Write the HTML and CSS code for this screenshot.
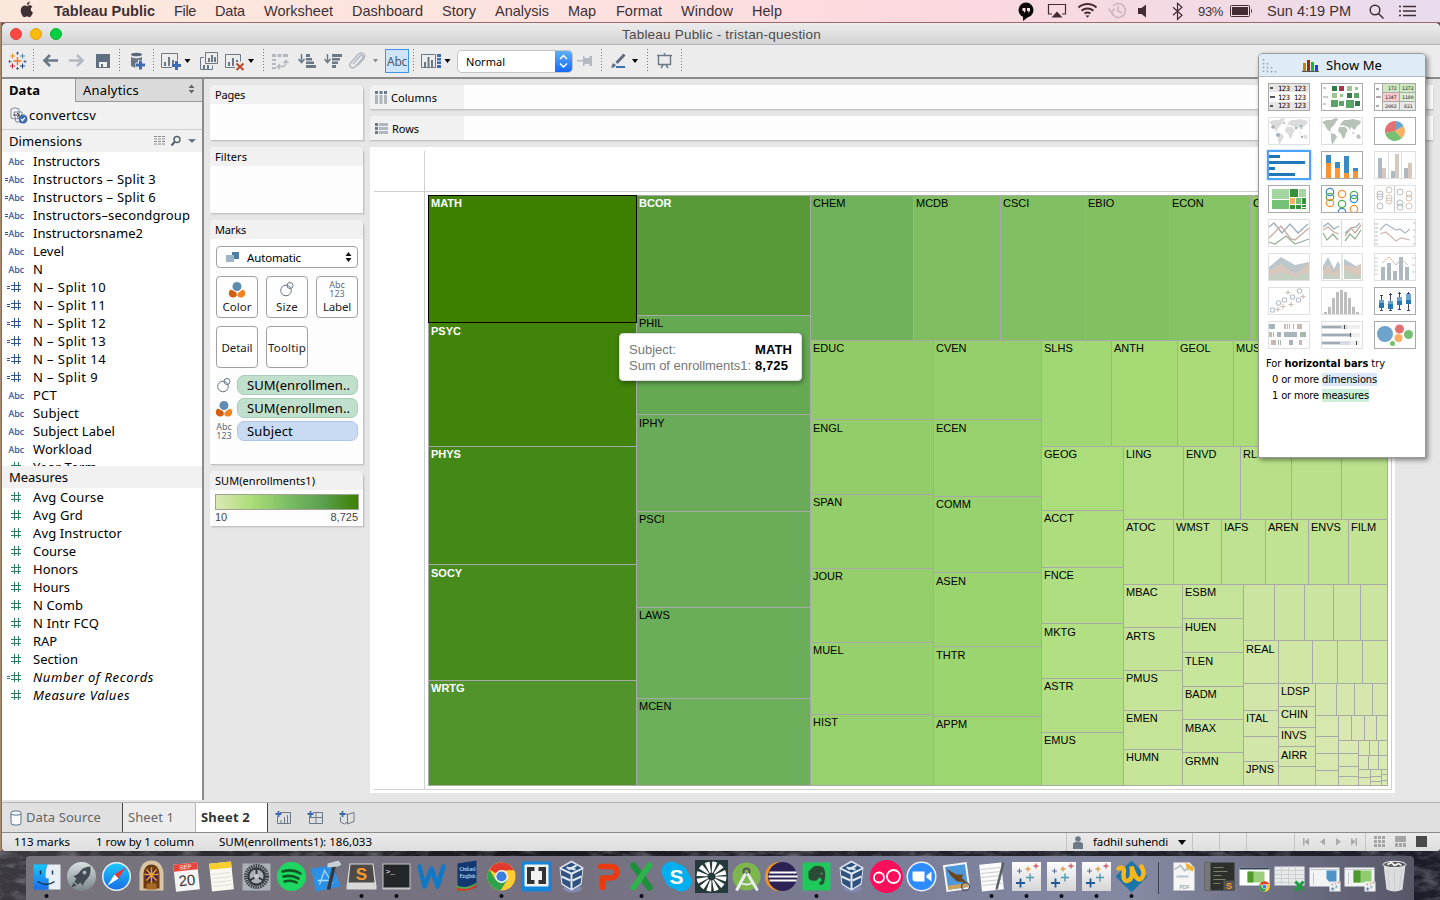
FILE: index.html
```html
<!DOCTYPE html>
<html lang="en">
<head>
<meta charset="utf-8">
<title>Tableau Public - tristan-question</title>
<link rel="stylesheet" href="styles.css">
</head>
<body>
<svg class="defs" width="0" height="0">
  <defs>
    <g id="world"><path d="M1 5l5-2 6 0 3 2-2 3-3 3-1 3 2 2-2-1-3-3-3-5zM11 2l5-1 1 2-3 2zM10 16l4 1 2 3-2 3-2 4-1 0-1-5zM20 6l3-3 4 0 5-1 8 2-1 3-3 2-2 4-2-1-2-2-1 3-2-3-3-1-3-1-2 1zM18 10l6 0 3 3-2 3-1 4-2 2-2-5-3-3zM35 19l3-2 2 4-3 1zM31 14l3 3-2 0z"/></g>
    <g id="hash"><path d="M3.500-5V5M7.500-5V5M0-1.500H10M0 2.500H10" fill="none" stroke-width="1"/></g>
    <g id="plus4" fill="none"><path d="M-6 2v9M-10.500 6.500h9" stroke="#1d5a96" stroke-width="1.800"/><path d="M3.500-3v8M-.5 1h8" stroke="#4a9bb0" stroke-width="1.400"/><path d="M1.500-10v5M-1-7.500h5" stroke="#e39a4a" stroke-width="1.300"/><path d="M-7-8v5M-9.500-5.500h5" stroke="#5a6b9a" stroke-width="1"/><path d="M9.500-13v5M7-10.500h5" stroke="#cf5a63" stroke-width="1.300"/></g>
    <linearGradient id="gp" x2="0" y2="1"><stop stop-color="#fdfdfd"/><stop offset="1" stop-color="#d5d5d9"/></linearGradient>
    <linearGradient id="gb" x2="0" y2="1"><stop stop-color="#1ac8fb"/><stop offset="1" stop-color="#1a6fe8"/></linearGradient>
    <linearGradient id="gs" x2="0" y2="1"><stop stop-color="#d9e0e0"/><stop offset="1" stop-color="#79848a"/></linearGradient>
    <g id="colorico"><path d="M-6 .5a4.300 4.300 0 1 0 6 5.500l-1-3z" fill="#d4600f"/><path d="M6 .5a4.300 4.300 0 1 1-6 5.500l2-3z" fill="#f58220"/><circle cy="-2.500" r="5.200" fill="#fff"/><circle cy="-2.500" r="4.500" fill="#5d8cb0"/></g>
    <g id="sizeico" fill="none" stroke="#6a7685"><circle cx="-1" cy="1.500" r="5.300"/><circle cx="3" cy="-3.500" r="3"/></g>
    <g id="vbox"><ellipse cx="1" cy="12" rx="9" ry="4" fill="#8389b0"/><path d="M0-16L12-9 10 8 0 14-10 8-12-9z" fill="#dfe7f0"/><path d="M0-14L10-8.500 0-4-10-8.500z" fill="#2c4f80"/><path d="M-11-7L-1-2V12L-9 7zM11-7L1-2V12L9 7z" fill="#31517f"/><path d="M-10 0L-1 4M10 0L1 4M-5-9L4-7M5-11L-3-7" stroke="#dfe7f0" stroke-width="2"/></g>
    <g id="chrome"><circle r="14" fill="#fc3"/><path d="M0 0L-12-7A14 14 0 0 1 12.500-6.500L0-6z" fill="#e23a2e"/><path d="M-12.200-7A14 14 0 0 0-1 14L6 3-6 3z" fill="#2fa34b"/><circle r="6.400" fill="#fff"/><circle r="5.100" fill="#3b7de0"/></g>
    <filter id="rough"><feTurbulence type="fractalNoise" baseFrequency=".05 .12" numOctaves="4" seed="4"/><feColorMatrix values="0 0 0 0 .55 0 0 0 0 .56 0 0 0 0 .62 1.800 0 0 0 -.75"/></filter>
  </defs>
</svg>
<div class="desktop">
<header class="menubar">
  <svg width="34" height="22" viewBox="20 0 34 22"><path d="M28 5.800c1.200-.8 3.200-.6 4.300.9-2.200 1.500-1.900 4.500.6 5.600-.7 2.400-2 4.900-3.300 4.900-1.100 0-1.400-.6-2.600-.6s-1.600.6-2.600.6c-1.800 0-4.200-4.600-3.600-7.700.6-3.600 3.800-4.700 5.700-3.600.6.300.9.200 1.500-.1zM26.800 5c-.1-1.700 1.300-3.300 3-3.500.2 1.800-1.300 3.500-3 3.500z" fill="#3f3034"/></svg>
  <b data-w="101">Tableau Public</b><span data-w="22">File</span><span data-w="30">Data</span><span data-w="69">Worksheet</span><span data-w="71">Dashboard</span><span data-w="34">Story</span><span data-w="54">Analysis</span><span data-w="28">Map</span><span data-w="46">Format</span><span data-w="52">Window</span><span data-w="30">Help</span>
  <svg width="180" height="22" viewBox="1017 0 180 22"><circle cx="1026" cy="10" r="7.500" fill="#0c0808"/><path d="M1023 15v6l5-4z" fill="#0c0808"/><path d="M1022.500 8h3v3l-1.500 2v-2h-1.500zM1027 8h3v3l-1.500 2v-2h-1.500z" fill="#fbdce0"/><g fill="none" stroke="#432c34" stroke-width="1.200"><path d="M1052 14h-3.500V4.500h17V14h-3.500"/><path d="M1078.500 7.500a13.500 13.500 0 0 1 18 0M1081.500 10.700a9.500 9.500 0 0 1 12 0M1084.500 13.600a5 5 0 0 1 6 0" stroke-width="1.900"/><path d="M1173 6.500l9 8-4.500 4V2.500l4.500 4-9 8" transform="translate(0 .8)"/></g><path d="M1051.500 17.500l5.500-6 5.500 6zM1085.500 15.500h4l-2 2.200zM1138 8h3.500l4.500-3.500v13l-4.500-3.500h-3.500z" fill="#432c34"/><g fill="none" stroke="#cdb3bc" stroke-width="1.500"><path d="M1111.500 12a7 7 0 1 0 1.500-6M1118 6v5l4 2"/><path d="M1108.500 8.500l3 4 3-4"/></g></svg>
  <span class="pct" data-w="25">93%</span>
  <svg width="37" height="22" viewBox="1230 0 37 22"><rect x="1230.500" y="5.500" width="19" height="11" rx="1" fill="none" stroke="#432c34"/><rect x="1232" y="7" width="16" height="8" fill="#432c34"/><path d="M1251 8.500q2 2.500 0 5z" fill="#432c34"/></svg>
  <span data-w="84">Sun 4:19 PM</span>
  <svg width="60" height="22" viewBox="1365 0 60 22"><g fill="none" stroke="#432c34" stroke-width="1.500"><circle cx="1375" cy="10" r="4.800"/><path d="M1378.500 13.500l5 5"/><path d="M1399 6.500h2M1403 6.500h13M1399 11h2M1403 11h13M1399 15.500h2M1403 15.500h13" stroke-width="1.700"/></g></svg>
</header>

<main class="window">
  <div class="titlebar"><i class="dot red"></i><i class="dot yellow"></i><i class="dot green"></i><span class="title" data-w="199">Tableau Public - tristan-question</span></div>
  <div class="toolbar">
    <svg class="ic" width="24" viewBox="8 45 24 32"><g fill="none"><path d="M17.500 57v8M13.500 61h8" stroke="#e8762c" stroke-width="1.500"/><path d="M12.500 53.500v5M10 56h5" stroke="#eb912c"/><path d="M22.500 63.500v5M20 66h5" stroke="#1f457e"/><path d="M12.500 63.500v5M10 66h5" stroke="#c72035"/><path d="M22.500 53.500v5M20 56h5" stroke="#59879b"/><path d="M17.500 51.500v3.500M16 53h3M17.500 67v3M16 68.500h3M9.500 60v3M8.500 61.500h3M25 60v3M23.500 61.500h3" stroke="#5b6591"/></g></svg>
    <i class="sep"></i>
    <svg class="ic" width="26" viewBox="42 45 26 32"><path d="M58 60.500H45M50 55l-5.500 5.500L50 66" fill="none" stroke="#6b7886" stroke-width="2.600"/></svg>
    <svg class="ic" width="27" viewBox="68 45 27 32"><path d="M69 60.500h13M77 55l5.500 5.500L77 66" fill="none" stroke="#b2b9c2" stroke-width="2.600"/></svg>
    <svg class="ic" width="23" viewBox="95 45 23 32"><path d="M96 54h14v14H96z" fill="#5f6f80"/><path d="M99 62h8v5h-8z" fill="#eee"/><path d="M101 64h2v3h-2z" fill="#5f6f80"/></svg>
    <i class="sep"></i>
    <svg class="ic" width="22" viewBox="130 45 22 32"><ellipse cx="136.500" cy="54.500" rx="5.500" ry="1.800" fill="#566879"/><path d="M131 57q5.500 2.500 11 0v9q-5.500 3-11 0z" fill="#6b7886"/><path d="M131 61.500q5.500 2.500 11 0" stroke="#566879" fill="none"/><path d="M140.500 60v10M135.500 65h10" stroke="#eee" stroke-width="5"/><path d="M140.500 60.500v9M136 65h9" stroke="#3e6ab0" stroke-width="3"/></svg>
    <i class="sep"></i>
    <svg class="ic" width="24" viewBox="160 45 24 32"><path d="M172 67.500h-10.500v-14h16v7" fill="none" stroke="#6b7886"/><path d="M164 62h2v4h-2zM168 57h2v9h-2zM172 60h2v4h-2z" fill="#6b7886"/><path d="M176.500 61v9M172 65.500h9" stroke="#3e6ab0" stroke-width="3"/></svg>
    <svg class="ic caret" width="15" viewBox="184 45 15 32"><path d="M184.500 59h6l-3 4z"/></svg>
    <svg class="ic" width="25" viewBox="199 45 25 32"><g fill="none" stroke="#6b7886"><path d="M205.500 52.500h12v11h-12zM204 57.500h-3.500v12h12v-4"/></g><path d="M208 58h2v4h-2zM211 55h2v7h-2zM214 57h2v5h-2zM203 65h2v4h-2zM207 65h2v4h-2z" fill="#6b7886"/></svg>
    <svg class="ic" width="23" viewBox="224 45 23 32"><path d="M235 67.500h-9.500v-13h15v7" fill="none" stroke="#6b7886"/><path d="M228 62h2v4h-2zM232 58h2v8h-2zM236 60h2v2h-2z" fill="#6b7886"/><path d="M236.500 63.500l7 6.500M243.500 63.500l-7 6.500" stroke="#b8502f" stroke-width="2.200"/></svg>
    <svg class="ic caret" width="15" viewBox="247 45 15 32"><path d="M248 59h6l-3 4z"/></svg>
    <i class="sep"></i>
    <svg class="ic" width="26" viewBox="271 45 26 32"><path d="M272 54h4v3h-4zM277.500 54h4v3h-4zM283 54h5v3h-5zM272 59h4v2h-4zM272 63h4v2h-4zM272 67h4v2h-4z" fill="#b2b9c2"/><path d="M278 66.500h4q4 0 4-5M280 64l-2.500 2.500L280 69M283.500 63l2.500-2.500 2.500 2.500" fill="none" stroke="#b2b9c2" stroke-width="1.500"/></svg>
    <svg class="ic" width="27" viewBox="297 45 27 32"><path d="M301.500 54v8M298.500 59l3 3.500 3-3.500" fill="none" stroke="#6b7886" stroke-width="1.500"/><path d="M306 54h4v3h-4zM306 58h6v2.500h-6zM306 61.500h8v2.500h-8zM306 65h10v3h-10z" fill="#6b7886"/></svg>
    <svg class="ic" width="24" viewBox="324 45 24 32"><path d="M327.500 54v8M324.500 59l3 3.500 3-3.500" fill="none" stroke="#6b7886" stroke-width="1.500"/><path d="M332 54h10v3h-10zM332 58h8v2.500h-8zM332 61.500h6v2.500h-6zM332 65h4v3h-4z" fill="#6b7886"/></svg>
    <svg class="ic" width="24" viewBox="348 45 24 32"><path d="M353 64l7-8q2-1.500 3 .5v1.500l-8 9q-3 2-5-.5-.8-2 .5-3.500l8-9q3-2 5.500.5 1.500 2-.5 4.500l-6 6.500" fill="none" stroke="#b2b9c2" stroke-width="1.500"/></svg>
    <svg class="ic caret dim" width="13" viewBox="372 45 13 32"><path d="M373 59h5l-2.500 3.500z"/></svg>
    <span class="abcbtn"><span data-w="20">Abc</span></span>
    <i class="sep"></i>
    <svg class="ic" width="24" viewBox="420 45 24 32"><path d="M421.500 54.500h14v13h-14z" fill="none" stroke="#6b7886"/><path d="M424 62h2v5h-2zM427.500 57h2v10h-2zM431 60h2v7h-2z" fill="#6b7886"/><path d="M437 54h4v3h-4zM437 58h4v2.500h-4zM437 61.500h4v2.500h-4zM437 65h4v3h-4z" fill="#3e6ab0"/></svg>
    <svg class="ic caret" width="13" viewBox="444 45 13 32"><path d="M444.500 59h6l-3 4z"/></svg>
    <span class="select"><span data-w="39">Normal</span><svg width="17" height="21" viewBox="0 0 17 21"><path d="M5 8l3.500-3.500L12 8M5 12.500L8.500 16l3.500-3.500" fill="none" stroke="#fff" stroke-width="1.500"/></svg></span>
    <svg class="ic" width="24" viewBox="576 45 24 32"><path d="M577 60h6v1.600h-6zM583 56h1.500v2h5v-2h2.500v10h-2.500v-2h-5v2H583z" fill="#b2b9c2"/></svg>
    <i class="sep"></i>
    <svg class="ic" width="21" viewBox="610 45 21 32"><path d="M624.500 54.500l-8 8.500" stroke="#5f6f80" stroke-width="3"/><path d="M611 67.500l2-4.500 3 2-2 2.500z" fill="#5f6f80"/><path d="M616 67h9" stroke="#3e6ab0" stroke-width="2"/></svg>
    <svg class="ic caret" width="15" viewBox="631 45 15 32"><path d="M632 59h6l-3 4z"/></svg>
    <i class="sep"></i>
    <svg class="ic" width="24" viewBox="656 45 24 32"><path d="M657 55.500h15M658.500 56v8.500h12V56M661 68l2-3M668 68l-2-3M664.500 53v2" fill="none" stroke="#6b7886" stroke-width="1.400"/></svg>
    <i class="sep"></i>
  </div>

  <div class="work">
    <aside class="side">
      <div class="tabs"><b data-w="31">Data</b><span class="off"><span data-w="56">Analytics</span><svg width="7" height="10" viewBox="0 0 7 10"><path d="M.5 4L3.500.5 6.500 4zM.5 6l3 3.500 3-3.500z" fill="#666"/></svg></span></div>
      <div class="source"><svg width="18" height="18" viewBox="0 0 18 18"><path d="M1 2q4-2.500 8 0v9q-4 2-8 0zM4 5h8v10H6z" fill="#f5f5f5" stroke="#7a8794"/><path d="M3 8h6M7 6l2.500 2L7 10" fill="none" stroke="#444"/><circle cx="13" cy="12" r="4.500" fill="#3e6ab0"/><path d="M11 12l1.500 1.700L15 10.500" fill="none" stroke="#fff" stroke-width="1.200"/></svg><span data-w="67">convertcsv</span></div>
      <div class="head"><span data-w="73">Dimensions</span><svg width="44" height="12" viewBox="0 0 44 12"><path d="M0 1.500h12M0 4h12M0 6.500h12M0 9h12" stroke="#888" stroke-dasharray="3 1"/><circle cx="23" cy="4.500" r="3" fill="none" stroke="#555f6b" stroke-width="1.400"/><path d="M20.500 7l-3 3.500" stroke="#555f6b" stroke-width="2"/><path d="M34 4h8l-4 4z" fill="#6b7886"/></svg></div>
      <div class="list dims" id="dims"></div>
      <div class="head"><span data-w="59">Measures</span></div>
      <div class="list meas" id="meas"></div>
    </aside>

    <div class="content">
      <section class="cards">
        <div class="card pages"><h3 data-w="30">Pages</h3></div>
        <div class="card filters"><h3 data-w="32">Filters</h3></div>
        <div class="card marks"><h3 data-w="31">Marks</h3>
          <div class="auto"><svg width="14" height="11" viewBox="0 0 14 11"><path d="M0 3h8v7H0z" fill="#9db5c9"/><path d="M6 0h7v7H8V3H6z" fill="#4d7da3"/></svg><span data-w="54">Automatic</span><svg width="7" height="12" viewBox="0 0 7 12"><path d="M.5 5l3-4 3 4zM.5 7l3 4 3-4z" fill="#111"/></svg></div>
          <div class="btns">
            <div class="btn"><svg width="30" height="18" viewBox="-15 -9 30 18"><use href="#colorico"/></svg><span data-w="29">Color</span></div>
            <div class="btn"><svg width="30" height="18" viewBox="-15 -9 30 18"><use href="#sizeico"/></svg><span data-w="22">Size</span></div>
            <div class="btn"><span class="abc123"><span>Abc</span><span>123</span></span><span data-w="28">Label</span></div>
            <div class="btn one"><span data-w="31">Detail</span></div>
            <div class="btn one"><span data-w="38">Tooltip</span></div>
          </div>
          <div class="pill"><svg width="20" height="18" viewBox="-10 -9 20 18"><use href="#sizeico"/></svg><span class="g"><span data-w="103">SUM(enrollmen..</span></span></div>
          <div class="pill"><svg width="20" height="18" viewBox="-10 -9 20 18"><use href="#colorico"/></svg><span class="g"><span data-w="103">SUM(enrollmen..</span></span></div>
          <div class="pill"><span class="abc123"><span>Abc</span><span>123</span></span><span class="b"><span data-w="46">Subject</span></span></div>
        </div>
        <div class="card legend"><h3 data-w="100">SUM(enrollments1)</h3><div class="ramp"></div><div class="ends"><span>10</span><span>8,725</span></div></div>
      </section>
      <section class="view">
        <div class="shelf"><div class="lab"><svg width="12" height="13" viewBox="0 0 12 13"><path d="M0 0h3v3H0zM4.500 0h3v3h-3zM9 0h3v3H9z" fill="#6b7886"/><path d="M0 4h3v9H0zM4.500 4h3v9h-3zM9 4h3v9H9z" fill="#b0b6bd"/></svg><span data-w="46">Columns</span></div></div>
        <div class="shelf"><div class="lab"><svg width="13" height="11" viewBox="0 0 13 11"><path d="M0 0h3v3H0zM0 4h3v3H0zM0 8h3v3H0z" fill="#6b7886"/><path d="M4 0h9v3H4zM4 4h9v3H4zM4 8h9v3H4z" fill="#b0b6bd"/></svg><span data-w="27">Rows</span></div></div>
        <div class="sheet"><svg id="map" width="1025" height="646" viewBox="370 147 1025 646"></svg></div>
      </section>
    </div>
  </div>

  <div class="sheettabs">
    <div class="tab ds"><svg width="12" height="16" viewBox="0 0 12 16"><path d="M1 3.500v9q0 2.500 3 2.500h4q3 0 3-2.500v-9Q11 1 8 1H4Q1 1 1 3.500q0 1.500 3 1.500h4q3 0 3-1.500" fill="#fafafa" stroke="#5c738c"/></svg><span data-w="75">Data Source</span></div>
    <div class="tab s1"><span data-w="46">Sheet 1</span></div>
    <div class="tab s2"><b data-w="49">Sheet 2</b></div>
    <svg width="90" height="29" viewBox="268 803 90 29"><g fill="none" stroke="#6b7886"><path d="M280 812.500h10.500v11h-13v-7M281 820v3M284.500 817v6M287.500 815v8M313 812.500h9.500v11h-13v-7M309 817.500h13M316 813v10M347.500 814v8l-3 2-4-2v-5M347.500 814v10l6.500-2.500v-9l-6.500 2-2-1"/></g><path d="M278.500 811v6M275.500 814h6M310.500 811v6M307.500 814h6M342.500 811v6M339.500 814h6" stroke="#3e6ab0" stroke-width="1.800"/></svg>
  </div>
  <div class="status">
    <span data-w="56">113 marks</span><span data-w="98">1 row by 1 column</span><span data-w="153">SUM(enrollments1): 186,033</span>
    <div class="user"><svg width="12" height="13" viewBox="0 0 12 13"><circle cx="6" cy="3" r="2.800" fill="#6b7886"/><path d="M1 13V9q0-3 3-3h4q3 0 3 3v4z" fill="#6b7886"/></svg><span data-w="75">fadhil suhendi</span><svg width="8" height="5" viewBox="0 0 8 5"><path d="M0 0h8L4 5z"/></svg></div>
    <i class="c"></i><i class="c"></i><i class="c wide"></i>
    <svg class="nav" width="143" height="18" viewBox="1295 833 143 18"><path d="M1303 838h1.500v7.500H1303zM1309 838v7.500l-4.500-3.700zM1325 838v7.500l-5-3.700zM1336 838v7.500l5-3.700zM1351 838v7.500l4.500-3.700zM1355.500 838h1.500v7.500h-1.500z" fill="#aaa"/><path d="M1365.500 833v18" stroke="#c4c4c4"/><path d="M1374 836h3v3h-3zM1378 836h3v3h-3zM1382 836h3v3h-3zM1374 840h3v3h-3zM1378 840h3v3h-3zM1382 840h3v3h-3zM1374 844h3v3h-3zM1378 844h3v3h-3zM1382 844h3v3h-3zM1395 836h11v6h-11zM1395 843h3v4h-3zM1399 843h3v4h-3zM1403 843h3v4h-3z" fill="#a5a5a5"/><path d="M1416 836h11v11h-11z" fill="#4a4a4a"/></svg>
  </div>
</main>

<div class="tooltip"><span data-w="47">Subject:</span><b data-w="37">MATH</b><span data-w="122">Sum of enrollments1:</span><b data-w="33">8,725</b></div>

<div class="showme">
  <div class="smhead"><svg width="65" height="22" viewBox="1259 54 65 22"><path d="M1263.500 59v15M1267.500 63v11M1271.500 67v7M1275.500 71v3" stroke="#a2a8ad" stroke-width="1.600" stroke-dasharray="1.600 2.200"/><path d="M1303 63h3v8h-3z" fill="#b58a0a"/><path d="M1307 60h3v11h-3z" fill="#9c2a0a"/><path d="M1311 62h3v9h-3z" fill="#1fb52a"/><path d="M1315 65h3v6h-3z" fill="#2a35ff"/><path d="M1302 71.500h17" stroke="#555"/></svg><span data-w="56">Show Me</span></div>
  <div class="smgrid">
    <svg class="on" viewBox="0 0 42 28"><path d="M0 0h42v9H0zM0 19h42v9H0z" fill="#e6e6e6"/><path d="M2 4h3v2H2zM2 13h5v2H2zM2 22h3v2H2z" fill="#555"/><g font-family="DejaVu Sans Mono" font-size="7.200"><text x="10" y="8" textLength="12">123</text><text x="26" y="8" textLength="12">123</text><text x="10" y="17" textLength="12">123</text><text x="26" y="17" textLength="12">123</text><text x="10" y="25" textLength="12">123</text><text x="26" y="25" textLength="12">123</text></g></svg>
    <svg class="on" viewBox="0 0 42 28"><path d="M2 4h3v2H2zM2 13h5v2H2zM2 20h3v2H2z" fill="#ccc"/><path d="M11 3h5v5h-5zM26 10h5v5h-5zM34 18h5v5h-5z" fill="#2f7d46"/><path d="M18 3h5v5h-5z" fill="#b0304a"/><path d="M26 3h5v5h-5zM34 4h3v3h-3zM11 10h5v5h-5zM19 11h3v3h-3z" fill="#9fc493"/><path d="M33 10h5v5h-5zM10 17h7v7h-7zM18 18h5v5h-5zM25 17h8v8h-8z" fill="#59a567"/></svg>
    <svg class="on" viewBox="0 0 42 28"><path d="M9 1h16v9H9zM26 1h16v9H26z" fill="#cde8c0"/><path d="M9 10h16v9H9z" fill="#f9c9cd"/><path d="M26 10h16v9H26z" fill="#dcecd2"/><path d="M9 19h33v9H9z" fill="#e8e8e8"/><path d="M8.500 0v28M25.500 0v28M9 9.500h33M9 18.500h33" stroke="#aaa"/><path d="M2 5h3v2H2zM2 13h5v2H2zM2 22h3v2H2z" fill="#aaa"/><g font-family="DejaVu Sans Mono" font-size="4.800" fill="#222"><text x="14" y="7">172</text><text x="28" y="7">1272</text><text x="11" y="16">1347</text><text x="28" y="16">1180</text><text x="11" y="25">2082</text><text x="30" y="25">821</text></g></svg>
    <svg viewBox="0 0 42 28"><use href="#world" fill="#dcdcdc"/><g fill="#a5b0b8"><circle cx="5" cy="10" r="1.800"/><circle cx="10" cy="18" r="2"/><circle cx="28" cy="11" r="1.200"/><circle cx="33" cy="9" r="1.200"/><circle cx="34" cy="20" r="1.200"/><circle cx="16" cy="6" r="1"/></g></svg>
    <svg viewBox="0 0 42 28"><use href="#world" fill="#b9c2b8"/></svg>
    <svg class="on" viewBox="0 0 42 28"><path d="M21 14V4a10 10 0 0 1 8.700 5z" fill="#6ea3cc"/><path d="M21 14l8.700-5a10 10 0 0 1-2 12.300z" fill="#fdae61"/><path d="M21 14l6.700 7.300A10 10 0 0 1 11.200 16z" fill="#74bf72"/><path d="M21 14l-9.800 2A10 10 0 0 1 21 4z" fill="#e47072"/></svg>
    <svg class="sel" viewBox="0 0 42 28"><path d="M1 4h11v3H1zM1 10h36v3H1zM1 16h6v3H1zM1 22h26v3H1z" fill="#2277b5"/></svg>
    <svg class="on" viewBox="0 0 42 28"><path d="M5 4h5v8H5zM14 11h5v6h-5zM23 5h5v17h-5zM32 17h5v3h-5z" fill="#3a8bc4"/><path d="M5 12h5v15H5zM14 17h5v10h-5zM23 22h5v5h-5zM32 20h5v7h-5z" fill="#ff9233"/></svg>
    <svg viewBox="0 0 42 28"><path d="M4 7h4v20H4zM17 20h4v7h-4zM30 17h4v10h-4z" fill="#adb8bf"/><path d="M8 17h4v10H8zM21 3h4v24h-4zM34 12h4v15h-4z" fill="#d5c9bf"/><path d="M14.500 0v28M27.500 0v28" stroke="#ddd"/></svg>
    <svg class="on" viewBox="0 0 42 28"><path d="M4 4h17v10H4zM31 4h7v8h-7z" fill="#a4d6a1"/><path d="M4 15h17v9H4zM28 13h5v6h-5z" fill="#75c175"/><path d="M22 4h8v8h-8zM34 13h4v6h-4zM22 20h5v4h-5zM28 20h5v4h-5zM34 20h4v2h-4zM34 23h4v1h-4z" fill="#369138"/><path d="M22 13h5v6h-5z" fill="#fdae61"/></svg>
    <svg class="on" viewBox="0 0 42 28"><g fill="none" stroke-width="1.300"><g stroke="#3a8bc4"><circle cx="9" cy="7" r="3.700"/><circle cx="33" cy="14" r="3.700"/><circle cx="21" cy="27" r="3.700"/></g><g stroke="#4fb054"><circle cx="9" cy="12" r="3.700"/><circle cx="33" cy="10" r="3.700"/><circle cx="21" cy="19" r="3.700"/></g><g stroke="#ff9233"><circle cx="9" cy="18" r="3.700"/><circle cx="21" cy="9" r="3.700"/><circle cx="33" cy="24" r="3.700"/></g></g></svg>
    <svg viewBox="0 0 42 28"><g fill="none"><path d="M20.500 0v28" stroke="#ccc"/><g stroke="#b5bec5"><circle cx="6" cy="9" r="3"/><circle cx="6" cy="12" r="3"/><circle cx="6" cy="21" r="3"/><circle cx="26" cy="7" r="3"/><circle cx="26" cy="18" r="3"/><circle cx="26" cy="22" r="3"/></g><g stroke="#d5c4b8"><circle cx="15" cy="5" r="3"/><circle cx="15" cy="13" r="3"/><circle cx="15" cy="16" r="3"/><circle cx="35" cy="9" r="3"/><circle cx="35" cy="13" r="3"/><circle cx="35" cy="21" r="3"/></g></g></svg>
    <svg viewBox="0 0 42 28"><g fill="none" stroke-width="1.300"><path d="M1 8l5-4 8 10 8-9 8 9 10-9" stroke="#9fadba"/><path d="M1 19l12-12 10 13 4 1 14-12" stroke="#c7ada0"/><path d="M1 23l6 2 11-8 9 8 14-5" stroke="#98b098"/></g></svg>
    <svg viewBox="0 0 42 28"><g fill="none" stroke-width="1.300"><path d="M2 8l5-4 6 6 5-3M24 14l6-5 5-1 4-4" stroke="#9fadba"/><path d="M2 11l5-3 6 5 5 2M24 17l6-8 4 5 6-8" stroke="#c7ada0"/><path d="M2 14l4 7 6-6 5 6M24 22l5-7 5 5 6-9" stroke="#98b098"/><path d="M20.500 0v28" stroke="#ddd"/></g></svg>
    <svg viewBox="0 0 42 28"><g fill="none" stroke-width="1.200"><path d="M6 11l6-6 10 6 4-1 5 4 5-4" stroke="#adb8c4"/><path d="M6 15l6-2 10 9 5-3 9 2" stroke="#cfb9ae"/><path d="M1 5h3M1 9h3M1 13h3M1 17h3M1 21h3M1 25h3M39 4h3M39 11h3M39 18h3M39 25h3" stroke="#bbb"/></g></svg>
    <svg viewBox="0 0 42 28"><path d="M1 14L13 4l14 8 14-3v18H1z" fill="#bcc6cd"/><path d="M1 17l12-6 14 10 14-11v17H1z" fill="#d8c8bc"/><path d="M1 23l12-4 14 5 14-5v8H1z" fill="#c5d0c3"/></svg>
    <svg viewBox="0 0 42 28"><path d="M2 13l5-9 6 12 4-8 2 4v14H2zM23 6l12 7 5-2v15H23z" fill="#bcc6cd"/><path d="M2 18l5-7 6 9 6-8v14H2zM23 12l12 2 5-3v15H23z" fill="#d8c8bc"/><path d="M2 22l5-2 6 4 6-4v6H2zM23 17l12 5 5-1v5H23z" fill="#c5d0c3"/><path d="M21 0v28" stroke="#ddd" stroke-width="1.500"/></svg>
    <svg viewBox="0 0 42 28"><path d="M7 14h4v13H7zM13 10h4v17h-4zM19 18h4v9h-4zM25 4h4v23h-4zM31 14h4v13h-4z" fill="#adb8bf"/><path d="M8 10l7-6 7 8 5-6 7 6" fill="none" stroke="#d0bdb0"/><path d="M1 5h3M1 9h3M1 13h3M1 17h3M1 21h3M38 5h3M38 12h3M38 19h3" stroke="#ccc"/></svg>
    <svg viewBox="0 0 42 28"><g fill="none" stroke="#b5bec9" stroke-width="1.100"><circle cx="4.500" cy="23" r="2.200"/><circle cx="10.500" cy="16" r="2.200"/><circle cx="16.500" cy="13" r="2.200"/><circle cx="24.500" cy="10" r="2.200"/><circle cx="31.500" cy="4" r="2.200"/><circle cx="30.500" cy="13" r="2.200"/><path d="M20 3v5M17.500 5.500h5M35 7v5M32.500 9.500h5M23 15v5M20.500 17.500h5M15 17v5M12.500 19.500h5M10 20v5M7.500 22.500h5" stroke="#d0bdb0"/></g></svg>
    <svg viewBox="0 0 42 28"><path d="M3 25h3v2H3zM7 20h3v7H7zM11 11h3v16h-3zM15 5h3v22h-3zM19 3h3v24h-3zM23 5h3v22h-3zM27 11h3v16h-3zM31 20h3v7h-3zM35 25h3v2h-3z" fill="#bdbdbd"/></svg>
    <svg class="on" viewBox="0 0 42 28"><path d="M7.500 8v15M16.500 6v18M25.500 5v18M34.500 5v18M6 8.500h3M15 7.500h3M24 6.500h3M33 6.500h3M6 23.500h3M15 23.500h3M24 22.500h3M33 23.500h3" stroke="#335" stroke-width=".9"/><path d="M5 13h5v8H5zM14 14h5v8h-5zM23 10h5v8h-5zM32 7h5v10h-5z" fill="#2277b5"/><path d="M5 13h5v3H5zM14 14h5v3h-5zM23 10h5v4h-5zM32 7h5v6h-5z" fill="#6ea3cc"/></svg>
    <svg viewBox="0 0 42 28"><path d="M1 3h6v5H1zM21 3h1v5h-1zM16 11h13v5H16zM9 11h4v5H9zM21 19h4v5h-4zM12 19h1v5h-1z" fill="#a9b3ba"/><path d="M16 3h2v5h-2zM29 3h5v5h-5zM1 11h3v5H1zM3 19h5v5H3zM31 19h3v5h-3zM19 3h1v5h-1z" fill="#c9b8b0"/><path d="M5 11h1v5H5zM32 11h6v5h-6zM25 3h1v5h-1zM10 19h1v5h-1z" fill="#a9b8a9"/></svg>
    <svg viewBox="0 0 42 28"><path d="M1 4h38v4H1zM1 12h38v4H1zM1 20h38v4H1z" fill="#ecf0f3"/><path d="M1 4h25v4H1zM1 12h30v4H1zM1 20h28v4H1z" fill="#d6dce1"/><path d="M1 5h19v2H1zM1 13h28v2H1zM1 21h18v2H1z" fill="#a0aab1"/><path d="M23.500 4v4M29.500 12v4M35.500 20v4" stroke="#444"/></svg>
    <svg class="on" viewBox="0 0 42 28"><circle cx="11" cy="13" r="8" fill="#6ea3cc"/><circle cx="25.500" cy="8" r="4.500" fill="#e47072"/><circle cx="24.500" cy="17" r="4" fill="#fdae61"/><circle cx="34.500" cy="13.500" r="4.500" fill="#74bf72"/><circle cx="18.500" cy="22.500" r="2.500" fill="#74bf72"/></svg>
  </div>
  <p data-w="119">For <b>horizontal bars</b> try</p>
  <p class="in" data-w="105">0 or more <mark>dimensions</mark></p>
  <p class="in" data-w="97">1 or more <mark class="m">measures</mark></p>
</div>

<footer class="shore">
  <svg class="rock" width="1440" height="49"><rect width="1440" height="49" filter="url(#rough)"/></svg>
  <div class="dock">
    <svg class="run"><path d="M-13-12h14q-3 8-2 14h3q-.5 5 0 11h-15z" fill="#1b8df5"/><path d="M1-12h13v25H2q-.5-5 0-11H-1q-1-6 2-14z" fill="#e8eef5"/><path d="M-13-12h14q-3 8-2 14h3v11h-15z" fill="url(#gb)"/><path d="M-6-6v4M6-6v4M-9 5q9 6 17 0" fill="none" stroke="#14314f" stroke-width="1.400"/></svg>
    <svg><circle r="14.500" fill="url(#gs)"/><path d="M9-10q-8 0-12 7l-5 3 3 2-2 3 3 3 3-2 2 3 3-5q6-5 5-14zM-8 6l-2 5 5-2z" fill="#414a50"/><circle cx="3" cy="-4" r="2" fill="#a9b2b6"/></svg>
    <svg><circle r="14.500" fill="#e9eef2"/><circle r="13" fill="url(#gb)"/><path d="M9-9L2 2-2-2z" fill="#ee3333"/><path d="M-9 9L2 2-2-2z" fill="#fff"/></svg>
    <svg><path d="M-12 14V-4Q-10-16 0-16T12-4V14z" fill="#d6c6a6"/><path d="M-8 12V-3Q-7-12 0-12T8-3V12z" fill="#6d3b12"/><circle cy="-1" r="6" fill="#40195c"/><path d="M0-9v16M-7-2h14M-5-7L5 4M5-7L-5 4" stroke="#e9a52c" stroke-width="1.500"/><path d="M-5 7h10v6H-5z" fill="#a76b23"/></svg>
    <svg><g transform="rotate(-6)"><path d="M-12-13h24v27h-24z" fill="#f4f4f4"/><path d="M-12-13h24v7h-24z" fill="#e8453c"/><text y="-7.500" font-size="6" text-anchor="middle" fill="#fff">SEP</text><text y="9" font-size="15" text-anchor="middle" fill="#333">20</text></g></svg>
    <svg><g transform="rotate(-6)"><path d="M-11-14h22v28h-22z" fill="#f9f8ef"/><path d="M-11-14h22v6h-22z" fill="#f7cf2b"/><path d="M-9-3h18M-9 1h18M-9 5h18M-9 9h18" stroke="#ddd"/></g></svg>
    <svg><path d="M-14-13h28v27h-28z" fill="#aab2b8"/><circle r="10.500" fill="none" stroke="#3f4448" stroke-width="4" stroke-dasharray="1.500 .8"/><circle r="8" fill="none" stroke="#33373b" stroke-width="2"/><path d="M0 0v-8M0 0l7 4M0 0l-7 4" stroke="#33373b" stroke-width="2"/><circle r="2.500" fill="#ccc"/></svg>
    <svg><circle r="14.500" fill="#1ed760"/><path d="M-9-5q10-3 18 2M-8 0q8-2 15 2M-7 5q7-2 12 1" fill="none" stroke="#152" stroke-width="2.600" stroke-linecap="round"/></svg>
    <svg><path d="M-15-8l21-3 8 21-25 5z" fill="#2b91e8"/><path d="M-7 8L-2-6 6 7M-9 4h14" fill="none" stroke="#a9d9fb" stroke-width="1.300"/><path d="M8-12L2 13" stroke="#333a42" stroke-width="3.500"/><path d="M1-13l11-3 3 4-3 2-11 1z" fill="#c9cfd5"/></svg>
    <svg class="run"><path d="M-12-13h24l3 23v3h-30v-3z" fill="#d8d8d8"/><path d="M-11-12h22l2 18h-26z" fill="#4c4b49"/><text x="0" y="3" font-size="17" font-weight="bold" text-anchor="middle" fill="#ff9a2c">S</text></svg>
    <svg class="run"><path d="M-14-13h28v26h-28z" fill="#c6c6c6"/><path d="M-13-12h26v23h-26z" fill="#23272a"/><text x="-11" y="-3" font-size="8" fill="#fff" font-family="Liberation Mono">&gt;_</text></svg>
    <svg><path d="M-12-10L-7 10 0-8 6 10l6-20" fill="none" stroke="#1178c8" stroke-width="4.500" stroke-linejoin="round" stroke-linecap="round"/></svg>
    <svg><path d="M-9-13l19-3v27l-19 4z" fill="#12376f"/><path d="M-10 9q10 4 20-3v4q-10 7-20 4z" fill="#4ba84c"/><path d="M-10 12q10 4 20-3" stroke="#d33" fill="none" stroke-width="2"/><text x="-7" y="-6" font-size="6.500" fill="#cfe6ff" font-family="Liberation Serif" textLength="16">Oxford</text><text x="-7" y="1" font-size="6" fill="#cfe6ff" font-family="Liberation Serif" textLength="16">English</text></svg>
    <svg class="run"><use href="#chrome"/></svg>
    <svg><rect x="-15.500" y="-15" width="31" height="30" rx="3" fill="#1585d8"/><rect x="-12" y="-12" width="24" height="22" rx="1" fill="#f2f2f2"/><path d="M-9.500-9.500h7.500v4h-3.500v9h3.500v4h-7.500zM9.500-9.500H2v4h3.500v9H2v4h7.500z" fill="#333"/></svg>
    <svg><use href="#vbox"/></svg>
    <svg><path d="M-6-10H4q6.500 0 6.500 5.500T4 1.500H-4V11" fill="none" stroke="#e93a12" stroke-width="5.500" stroke-linecap="round" stroke-linejoin="round"/></svg>
    <svg class="run"><path d="M-8-11L8 11" stroke="#1f8f3d" stroke-width="6.500" stroke-linecap="round"/><path d="M8-11L-8 11" stroke="#2eb24c" stroke-width="6" stroke-linecap="round"/></svg>
    <svg><circle cx="-5" cy="-5" r="10" fill="#00aff0"/><circle cx="5" cy="5" r="10" fill="#00aff0"/><circle r="12.500" fill="#00aff0"/><text y="7.500" font-size="21" font-weight="bold" text-anchor="middle" fill="#fff">S</text></svg>
    <svg><path d="M-16.500-16.500h33v33h-33z" fill="#26393a"/><circle r="9.500" fill="none" stroke="#fff" stroke-width="11" stroke-dasharray="3.200 1.800"/><circle r="3.500" fill="#26393a"/></svg>
    <svg><circle r="14" fill="#7db64c"/><circle cy="-5" r="4" fill="#555"/><path d="M-1-3L-10 14M1-3l10 17" stroke="#e9ecec" stroke-width="3"/><path d="M-7 6q7 4 14 0" fill="none" stroke="#e9ecec" stroke-width="2"/><circle cy="-5" r="2" fill="#7db64c"/></svg>
    <svg><circle cx="-2" r="14.500" fill="#f7941e"/><circle cx="1" r="14.500" fill="#2c2255"/><path d="M-12-4h27M-13 0h29M-12 4h27" stroke="#fff" stroke-width="1.800"/></svg>
    <svg class="run"><path d="M-14-14h28v28h-28z" fill="#1fc85a"/><path d="M-8-5l5-5q6-2 10 1 3 6 1 13 0 5-5 4v-3h2v-3l-2-1-3 3q-6 1-8-2z" fill="#2d4a34"/><circle cx="5" cy="-3" r="1" fill="#1fc85a"/></svg>
    <svg><use href="#vbox"/></svg>
    <svg><circle r="16.500" fill="#fa0f5a"/><circle cx="-7.500" cy="1" r="5" fill="none" stroke="#fff" stroke-width="1.800"/><circle cx="7" r="6.500" fill="none" stroke="#fff" stroke-width="1.800"/></svg>
    <svg><circle r="15" fill="#eef2f8"/><circle r="13.500" fill="#2d8cff"/><path d="M-9-5H3v10h-9q-3 0-3-3zM5-1l5-4v10l-5-4z" fill="#fff"/></svg>
    <svg><g transform="rotate(-8)"><path d="M-12-13h24v27h-24z" fill="#f5f5f5"/><path d="M-10-11h20v23h-20z" fill="#4d97dc"/><path d="M-9-9l9 7 7 1-2 3 4 5-9-2-5-6z" fill="#6d451d"/><path d="M-10 8h20v4h-20z" fill="#c9a35c"/></g><circle cx="9" cy="10" r="4" fill="none" stroke="#556" stroke-width="1.500"/></svg>
    <svg class="run"><g transform="rotate(-6)"><path d="M-11-13h22v27h-22z" fill="#fafafa"/><path d="M-10-8h20M-10-4h20M-10 0h20M-10 4h20M-10 8h20" stroke="#ccc"/></g><path d="M12-14L5 13" stroke="#5b6168" stroke-width="2.500"/></svg>
    <svg class="run"><path d="M-14.500-14.500h29v29h-29z" fill="url(#gp)"/><use href="#plus4"/></svg>
    <svg class="run"><path d="M-14.500-14.500h29v29h-29z" fill="url(#gp)"/><use href="#plus4"/></svg>
    <svg class="run"><path d="M-14.500-14.500h29v29h-29z" fill="url(#gp)"/><use href="#plus4"/></svg>
    <svg class="run"><path d="M0-16L16 0 0 16-16 0z" fill="#1c75a8"/><path d="M-13-8q7-3 5 6 0 8 5 6 5-2 3-14 5 16 10 12 4-4 0-12" fill="none" stroke="#f9b71b" stroke-width="4.500" stroke-linecap="round"/></svg>
    <i class="dsep"></i>
    <svg><path d="M-11-14h16l5 5v23h-21z" fill="#f5f5f5"/><path d="M-10-7l6-4 4 5 6-3M-8 0h12" stroke="#b9c3cb" fill="none" stroke-width="2"/><path d="M1-14l9 5-2 4-6-3z" fill="#f2b33a"/><text y="12" font-size="5" text-anchor="middle" fill="#888">PDF</text></svg>
    <svg><path d="M-15-14h30v28h-30z" fill="#2e302d"/><path d="M-15-14h6v28h-6z" fill="#777"/><path d="M-6-9h10M-6-5h14M-6-1h8M-6 3h12M-6 7h7" stroke="#8d9577" stroke-width=".8"/><rect x="4" y="4" width="11" height="10" fill="#555"/><text x="6.500" y="12" font-size="9" font-weight="bold" fill="#ff9a2c">S</text></svg>
    <svg><path d="M-15-9h30v18h-30z" fill="#fff"/><path d="M-15-9h30v2h-30z" fill="#345"/><path d="M-7-5h17v11h-17z" fill="#9ad07c"/><path d="M-7-5h6v11h-6z" fill="#4f9a2c"/><use href="#chrome" transform="translate(10 10) scale(.38)"/></svg>
    <svg><path d="M-15-10h30v19h-30z" fill="#e7eaea"/><path d="M-15-6h30M-15-2h30M-15 2h30M-15 6h30M-8-10v19M-1-10v19M6-10v19" stroke="#c3cbca" stroke-width=".8"/><path d="M6 5l8 9M14 5l-8 9" stroke="#1e9a3f" stroke-width="3"/></svg>
    <svg><path d="M-15-9h30v19h-30z" fill="#f1f3f5"/><path d="M2-6h10v13H6l-4-5z" fill="#4f93c4"/><path d="M-15-7h30M-11-4v12" stroke="#c3c9cf"/><path d="M5 5h11v10H5z" fill="#eee"/><use href="#plus4" transform="translate(10.500 10) scale(.38)"/></svg>
    <svg><path d="M-15-9h30v19h-30z" fill="#f1f3f5"/><path d="M-6-6h18v12h-18z" fill="#8fcb6f"/><path d="M-6-6h7v12h-7z" fill="#4f9a2c"/><path d="M-15-7h30M-11-4v12" stroke="#c3c9cf"/><path d="M5 5h11v10H5z" fill="#eee"/><use href="#plus4" transform="translate(10.500 10) scale(.38)"/></svg>
    <svg><path d="M-11-12L-8 13q8 4 16 0l3-25z" fill="#e3e4e5" opacity=".95"/><path d="M-7-7l2 20M0-7v21M7-7l-2 20" stroke="#c9cccf"/><ellipse cy="-12" rx="11.500" ry="3.200" fill="#5c5f63" stroke="#eee"/><path d="M-7-12l4-2 3 3 4-2 3 2" stroke="#fff" fill="none" stroke-width="1.500"/></svg>
  </div>
</footer>
</div>
<script src="app.js"></script>
</body>
</html>
```

FILE: styles.css
```css
* { box-sizing: border-box; }
body { margin: 0; overflow: hidden; font-family: "Noto Sans", sans-serif; font-size: 13px; color: #000; }
svg { display: block; flex: none; }
.defs { position: absolute; }
[data-w] { white-space: nowrap; }
.desktop { width: 1440px; height: 900px; display: flex; flex-direction: column; position: relative; overflow: hidden; background: linear-gradient(90deg, #b99a76, #4d3d48 3px, #444 1439px, #8a6a8a); }

.menubar { height: 23px; flex: none; display: grid; align-items: center; padding-left: 20px; border-bottom: 1px solid #a06a6c;
  grid-template-columns: 34px 120px 41px 49px 88px 90px 53px 73px 48px 65px 71px 265px 181px 32px 37px 98px 60px;
  background: linear-gradient(90deg, #fbe8dc, #fde3df 35%, #fcd9df 65%, #f3dae4 83%, #e8dcee);
  font-family: "Liberation Sans", sans-serif; font-size: 14.500px; color: #3f3034; }
.menubar > span, .menubar > b { justify-self: start; }
.menubar .pct { font-size: 13px; }

.window { height: 828px; flex: none; margin: 0 0 0 2px; width: 1438px; display: flex; flex-direction: column; background: #e6e6e6; border-radius: 5px 5px 4px 4px; overflow: hidden; }
.titlebar { height: 22px; flex: none; display: flex; align-items: center; padding-left: 8px; gap: 8px; background: linear-gradient(#ececec, #d3d3d3); border-bottom: 1px solid #b4b4b4; }
.dot { width: 12px; height: 12px; border-radius: 50%; border: 1px solid #e0443e; background: #fc4845; }
.dot.yellow { background: #fdbc0a; border-color: #e0a010; }
.dot.green { background: #00d142; border-color: #10b030; }
.title { margin-left: 552px; padding-top: 1px; font-family: "Liberation Sans", sans-serif; font-size: 13.500px; color: #4b4b4b; }

.toolbar { height: 34px; flex: none; display: grid; padding-left: 6px; background: #ececec; border-bottom: 2px solid #8b8b8b; align-items: center;
  grid-template-columns: 24px 10px 26px 27px 23px 12px 22px 8px 24px 15px 25px 23px 15px 9px 26px 27px 24px 24px 13px 27px 8px 24px 13px 119px 24px 10px 21px 15px 10px 24px 10px; }
.ic { height: 32px; }
.caret { fill: #000; }
.caret.dim { fill: #888; }
.sep { width: 1px; height: 24px; margin-left: 1px; background: repeating-linear-gradient(#777 0 1px, transparent 1px 3px); }
.abcbtn { width: 24px; height: 24px; border: 1px solid #3e95e8; background: #cde4fb; font-size: 12px; color: #4d5b69; display: flex; align-items: center; justify-content: center; }
.select { height: 21px; width: 114px; display: flex; justify-content: space-between; align-items: center; padding-left: 8px; margin-left: 1px; background: #fff; border-radius: 4px; box-shadow: 0 0 0 1px #c4c4c4; overflow: hidden; font-size: 11px; }
.select svg { background: linear-gradient(#5faef8, #1469fb); }

.work { height: 723px; flex: none; display: flex; }
.side { width: 202px; flex: none; background: #fff; border-right: 2px solid #8b8b8b; height: 721px; }
.tabs { height: 23px; display: flex; background: #f1f1f1; }
.tabs b { padding: 0 0 0 7px; width: 73px; line-height: 22px; }
.tabs .off { flex: 1; display: flex; justify-content: space-between; background: #dadada; border: solid #999; border-width: 0 0 1px 1px; padding: 0 7px; line-height: 22px; }
.tabs .off svg { margin-top: 5px; }
.source { height: 28px; display: flex; align-items: center; padding-left: 8px; gap: 1px; background: #f1f1f1; border-bottom: 1px solid #ccc; }
.source span { margin-top: -2px; }
.head { height: 22px; display: flex; align-items: center; justify-content: space-between; padding: 0 4px 0 7px; background: #f1f1f1; }
.list { overflow: hidden; }
.dims { height: 314px; }
.row { height: 18px; display: grid; grid-template-columns: 31px auto; align-items: center; justify-content: start; line-height: 18px; }
.row.i { font-style: italic; }

.content { display: flex; flex: 1; padding: 6px 0 0 6px; }
.cards { width: 153px; margin-right: 7px; display: flex; flex-direction: column; gap: 7px; }
.card { background: #fdfdfd; border-radius: 5px 5px 0 0; box-shadow: 1px 1px 0 #c3c3c3, 2px 2px 1px #d5d5d5; }
.card h3 { margin: 0; height: 19px; line-height: 20px; padding-left: 5px; font-size: 11px; font-weight: 400; background: #f1f1f1; border-radius: 5px 5px 0 0; }
.pages { height: 55px; } .filters { height: 66px; } .marks { height: 244px; } .legend { height: 55px; }
.auto { margin: 7px 6px 8px; width: 142px; height: 22px; border: 1px solid #a0a0a0; border-radius: 4px; display: grid; grid-template-columns: 21px 98px 7px; align-items: center; padding-left: 9px; font-size: 11.500px; background: #fff; }
.btns { display: grid; grid-template-columns: repeat(3, 42px); gap: 8px; padding-left: 6px; margin-bottom: 7px; }
.btn { height: 42px; border: 1px solid #a0a0a0; border-radius: 4px; background: #fff; display: flex; flex-direction: column; align-items: center; padding-top: 3px; font-size: 11.500px; line-height: 15px; color: #222; }
.btn svg { margin-bottom: 1px; }
.btn.one { justify-content: center; padding: 0; }
.abc123 { display: flex; flex-direction: column; font-size: 9px; line-height: 9px; color: #5f6b78; text-align: center; margin-bottom: 1px; }
.pill { display: flex; align-items: center; gap: 3px; padding-left: 4px; height: 20px; margin-bottom: 3px; }
.pill > .abc123 { width: 20px; margin: 0; }
.pill .g, .pill .b { width: 121px; height: 20px; line-height: 18px; padding-left: 9px; border-radius: 7px; background: #c0dfcd; border: 1px solid #a9cdb8; }
.pill .b { background: #c9daf3; border-color: #b0c8e8; }
.ramp { margin: 4px 5px 0; width: 144px; height: 16px; border: 1px solid #a3a097; background: linear-gradient(90deg, #dce9b5, #abdd78 25%, #77ba62 53%, #5ba050 75%, #3d8000); }
.ends { display: flex; justify-content: space-between; padding: 1px 5px 0; font: 11px "Liberation Sans", sans-serif; color: #444; }

.view { width: 1063px; display: flex; flex-direction: column; gap: 7px; }
.shelf { height: 24px; flex: none; background: #fdfdfd; border-radius: 5px 0 0 0; box-shadow: 0 1px 0 #c3c3c3, 1px 2px 1px #d5d5d5; }
.lab { width: 94px; height: 24px; display: flex; align-items: center; gap: 4px; padding-left: 6px; background: #f1f1f1; border-radius: 5px 0 0 0; font-size: 11px; }
.lab svg { margin-left: -1px; }
.sheet { width: 1025px; background: #fff; }
.sheet svg { font-family: "Liberation Sans", sans-serif; font-size: 11px; }

.sheettabs { height: 31px; flex: none; display: flex; background: #e0e0e0; border-top: 1px solid #b5b5b5; border-bottom: 1px solid #8b8b8b; color: #666; }
.tab { display: flex; align-items: center; border-right: 1px solid #b5b5b5; font-size: 13px; padding-left: 6px; }
.tab span, .tab b { margin-top: -1px; }
.tab.ds { width: 121px; gap: 4px; border-color: #444; padding-left: 8px; }
.tab.s1 { width: 73px; background: #ececec; padding-left: 5px; }
.tab.s2 { width: 72px; background: #fff; color: #333; border-color: #444; padding-left: 5px; }
.status { height: 18px; flex: none; display: grid; grid-template-columns: 82px 123px 847px 127px 27px 27px 48px 1fr; padding-left: 12px; align-items: center; background: linear-gradient(#eaeaea, #dedede); font-size: 11.500px; }
.status > span { justify-self: start; margin-top: -1px; }
.user { height: 18px; display: flex; align-items: center; border: solid #c4c4c4; border-width: 0 1px; padding-left: 5px; }
.user span { margin: -1px 10px 0 9px; }
.status .c { height: 18px; border-right: 1px solid #c4c4c4; }

.tooltip { position: absolute; left: 619px; top: 333px; width: 183px; height: 48px; display: grid; grid-template-columns: 126px auto; align-content: center; justify-items: start; padding: 2px 9px 0; line-height: 16px; font-family: "Liberation Sans", sans-serif; font-size: 13px; color: #777; background: #fff; border: 1px solid #ddd; border-radius: 4px; box-shadow: 1px 2px 5px rgba(0,0,0,.4); }
.tooltip b { color: #000; }

.showme { position: absolute; left: 1258px; top: 53px; width: 168px; height: 405px; background: #fff; border: 1px solid #999; border-radius: 5px 5px 0 0; box-shadow: 2px 2px 5px rgba(0,0,0,.45); font-family: "DejaVu Sans Condensed", "DejaVu Sans", sans-serif; font-size: 11px; }
.smhead { height: 23px; display: flex; align-items: center; background: #dfebf6; border-bottom: 1px solid #b5bcc2; border-radius: 4px 4px 0 0; gap: 2px; font-family: "Noto Sans", sans-serif; font-size: 13px; }
.smgrid { display: grid; grid-template-columns: repeat(3, 42px); gap: 6px 11px; padding: 6px 9px 7px; }
.smgrid svg { width: 42px; height: 28px; outline: 1px solid #e0e0e0; outline-offset: -1px; }
.smgrid svg.on { outline-color: #aaa; }
.smgrid svg.sel { outline: 2px solid #4aa3f8; outline-offset: -1px; box-shadow: 0 0 2px 1px #8fc5fa; }
.showme p { margin: 0 0 0 7px; line-height: 16px; width: max-content; }
.showme p.in { margin-left: 13px; }
mark { background: #dbe9fb; color: #000; }
mark.m { background: #ccefdc; }

.shore { height: 49px; flex: none; display: flex; position: relative; padding-left: 26px; background: linear-gradient(90deg, #3c3a40, #17171d 35%, #22232c 65%, #1b1e28); align-items: end; }
.rock { position: absolute; left: 0; top: 0; opacity: .45; }
.dock { position: relative; width: 1388px; height: 44px; display: flex; padding: 0 0 0 3px; border-radius: 4px 4px 0 0; background: linear-gradient(90deg, #77747d, #757181 40%, #7c7f9a 65%, #8589a2 80%, #565868); }
.dock svg { width: 35px; height: 44px; overflow: visible; font-family: "Liberation Sans", sans-serif; }
.dsep { width: 1px; height: 32px; margin: 6px 8px 0 9px; background: #3f4255; }
```

FILE: app.js
```js
const NS = 'http://www.w3.org/2000/svg';

// Field lists: [icon kind, name, width, italic]
const dims = [['a', 'Instructors', 67], ['=a', 'Instructors – Split 3', 123], ['=a', 'Instructors – Split 6', 123],
  ['=a', 'Instructors–secondgroup', 157], ['=a', 'Instructorsname2', 110], ['a', 'Level', 31], ['a', 'N', 9],
  ['=h', 'N – Split 10', 73], ['=h', 'N – Split 11', 73], ['=h', 'N – Split 12', 73], ['=h', 'N – Split 13', 73],
  ['=h', 'N – Split 14', 73], ['=h', 'N – Split 9', 65], ['a', 'PCT', 24], ['a', 'Subject', 46],
  ['a', 'Subject Label', 82], ['a', 'Workload', 59], ['gh', 'Year Term', 64]];
const meas = [['h', 'Avg Course', 71], ['h', 'Avg Grd', 50], ['h', 'Avg Instructor', 89], ['h', 'Course', 43],
  ['h', 'Honors', 45], ['h', 'Hours', 37], ['h', 'N Comb', 50], ['h', 'N Intr FCQ', 66], ['h', 'RAP', 24],
  ['h', 'Section', 45], ['=h', 'Number of Records', 121, 1], ['h', 'Measure Values', 97, 1]];

function fieldRows(id, rows, color) {
  document.getElementById(id).innerHTML = rows.map(([k, name, w, it]) => {
    const c = k === 'gh' ? '#2a7f5f' : color;
    const eq = k[0] === '=' ? `<path d="M${k[1] === 'h' ? '5 8.500h3M5 10.500h3' : '3 8.500h3M3 10.500h3'}" stroke="${c}"/>` : '';
    const body = k.endsWith('h') ? `<use href="#hash" x="9" y="9" stroke="${c}"/>`
      : `<text x="6.500" y="13" font-size="9.500" fill="${c}" stroke="${c}" stroke-width=".2" textLength="15.500" lengthAdjust="spacingAndGlyphs">Abc</text>`;
    return `<div class="row${it ? ' i' : ''}"><svg width="31" height="18">${eq}${body}</svg><span data-w="${w}">${name}</span></div>`;
  }).join('');
}
fieldRows('dims', dims, '#2f5597');
fieldRows('meas', meas, '#2a7f5f');

// Treemap strips: [direction, cross start, cross end, edges, labels, colours]
const strips = [
  ['v', 428, 636, [195, 322, 446, 564, 680, 785], 'MATH PSYC PHYS SOCY WRTG', ['#3d8000', '#40840a', '#448915', '#478b1c', '#51942b']],
  ['v', 636, 810, [195, 315, 414, 511, 607, 698, 785], 'BCOR PHIL IPHY PSCI LAWS MCEN', ['#589a38', '#66a953', '#69ab58', '#6aac58', '#6bae5a', '#6caf5b']],
  ['h', 195, 340, [810, 913, 1000, 1085, 1169, 1250, 1387], 'CHEM MCDB CSCI EBIO ECON CHEN', ['#70b25c', '#7ebe61', '#80bf62', '#81c162', '#84c363', '#8cc967']],
  ['v', 810, 933, [340, 419, 494, 568, 642, 714, 785], 'EDUC ENGL SPAN JOUR MUEL HIST', ['#90cb68', '#92cd69', '#93ce6a', '#94cf6b', '#96d06c', '#97d16d']],
  ['v', 933, 1041, [340, 419, 496, 572, 646, 716, 785], 'CVEN ECEN COMM ASEN THTR APPM', ['#95cf6b', '#97d16d', '#98d26e', '#9ad46f', '#9bd570', '#9dd671']],
  ['h', 340, 446, [1041, 1111, 1177, 1233, 1288, 1340, 1387], 'SLHS ANTH GEOL MUSC . .', ['#a1d873', '#a5da75', '#a9dc78', '#aadc79', '#abdd7a', '#acdd7b']],
  ['v', 1041, 1123, [446, 510, 567, 623, 678, 732, 785], 'GEOG ACCT FNCE MKTG ASTR EMUS', ['#abdd7b', '#aedd7e', '#afde80', '#b1df82', '#b2df83', '#b4df85']],
  ['h', 446, 519, [1123, 1183, 1240, 1291, 1341, 1387], 'LING ENVD RLST . .', ['#b4df85', '#b5df86', '#b8e089', '#b9e18b', '#bbe18d']],
  ['h', 519, 584, [1123, 1173, 1221, 1265, 1308, 1348, 1387], 'ATOC WMST IAFS AREN ENVS FILM', ['#bce18d', '#bde28e', '#bee28f', '#bfe390', '#c0e391', '#c1e393']],
  ['v', 1123, 1182, [584, 627, 670, 710, 749, 785], 'MBAC ARTS PMUS EMEN HUMN', ['#c2e494', '#c3e496', '#c4e497', '#c5e498', '#c6e599']],
  ['v', 1182, 1243, [584, 618, 652, 686, 719, 752, 785], 'ESBM HUEN TLEN BADM MBAX GRMN', ['#c6e499', '#c7e59a', '#c7e59b', '#c8e59c', '#c9e59d', '#cae69e']],
  ['h', 584, 640, [1243, 1274, 1304, 1333, 1360, 1387], '. . . . .', ['#cbe5a0']],
  ['h', 640, 683, [1243, 1278, 1312, 1337, 1362, 1387], 'REAL . . . .', ['#cfe6a4']],
  ['v', 1243, 1278, [683, 710, 736, 761, 785], '. ITAL . JPNS', ['#d3e6a9']],
  ['v', 1278, 1315, [683, 706, 727, 746, 766, 785], 'LDSP CHIN INVS AIRR .', ['#d4e7aa']],
  ['h', 683, 715, [1315, 1336, 1354, 1372, 1387], '. . . .', ['#d6e7ad']],
  ['v', 1315, 1338, [715, 736, 753, 770, 785], '. . . .', ['#d7e8ae']],
  ['h', 715, 740, [1338, 1351, 1364, 1376, 1387], '. . . .', ['#d9e8b0']],
  ['v', 1338, 1358, [740, 753, 766, 776, 785], '. . . .', ['#dae9b1']],
  ['h', 740, 755, [1358, 1369, 1378, 1387], '. . .', ['#dbe9b2']],
  ['h', 755, 769, [1358, 1368, 1378, 1387], '. . .', ['#dbe9b2']],
  ['v', 1358, 1370, [769, 777, 785], '. .', ['#dbe9b3']],
  ['v', 1370, 1381, [769, 776, 781, 785], '. . .', ['#dbe9b3']],
  ['v', 1381, 1387, [769, 774, 780, 785], '. . .', ['#dbe9b3']]
];
// Labels whose baseline rounds down by one pixel.
const lower = new Set('PSYC SOCY IPHY ENGL ECEN ASEN THTR MKTG ARTS HUEN TLEN MBAX GRMN REAL AIRR'.split(' '));
let out = '<path d="M424.500 151V789M374 191.500H1391M1391.500 151V789.500H374" fill="none" stroke="#cfcfcf"/>';
let labels = '';
for (const [dir, a, b, edges, names, cols] of strips) {
  names.split(' ').forEach((n, i) => {
    const [x, y, w, h] = dir === 'v' ? [a, edges[i], b - a, edges[i + 1] - edges[i]] : [edges[i], a, edges[i + 1] - edges[i], b - a];
    out += `<rect x="${x + .5}" y="${y + .5}" width="${w}" height="${h}" fill="${cols[i] || cols[0]}" stroke="#a9a9a9"/>`;
    if (n !== '.') {
      const light = x === 428 || n === 'BCOR';
      labels += `<text x="${x + 3}" y="${y + 12 + lower.has(n)}" fill="${light ? '#fff' : '#000'}"${light ? ' font-weight="bold"' : ''}>${n}</text>`;
    }
  });
}
out += '<rect x="428.500" y="195.500" width="208" height="127" fill="none" stroke="#000"/>';
document.getElementById('map').innerHTML = out + labels;

// Dock icons share one coordinate system; running apps get a dot.
document.querySelectorAll('.dock svg').forEach(s => {
  s.setAttribute('viewBox', '-17.500 -20.500 35 44');
  if (s.classList.contains('run')) {
    const c = document.createElementNS(NS, 'circle');
    c.setAttribute('cy', 19.500); c.setAttribute('r', 2); c.setAttribute('fill', '#0b0b12');
    s.append(c);
  }
});

// Tracking for labels with a set width.
document.querySelectorAll('[data-w]').forEach(el => {
  const r = document.createRange();
  r.selectNodeContents(el);
  const n = el.textContent.length;
  el.style.letterSpacing = ((+el.dataset.w - r.getBoundingClientRect().width) / n).toFixed(3) + 'px';
});
```
